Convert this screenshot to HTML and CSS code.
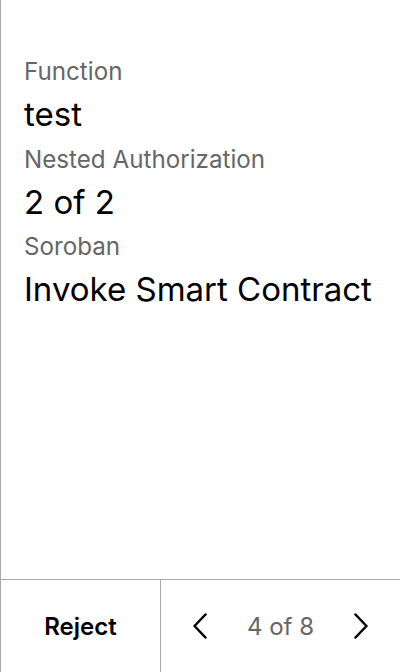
FILE: index.html
```html
<!DOCTYPE html>
<html>
<head>
<meta charset="utf-8">
<link rel="stylesheet" href="styles.css">
</head>
<body>
<div class="screen">
  <div class="content">
    <div class="field">
      <div class="label">Function</div>
      <div class="value">test</div>
    </div>
    <div class="field">
      <div class="label">Nested Authorization</div>
      <div class="value">2 of 2</div>
    </div>
    <div class="field">
      <div class="label">Soroban</div>
      <div class="value">Invoke Smart Contract</div>
    </div>
  </div>
  <div class="footer">
    <div class="reject">Reject</div>
    <div class="pager">
      <svg class="chev" width="16" height="26" viewBox="0 0 16 26"><path d="M13.5 1.5 L2.5 13 L13.5 24.5" fill="none" stroke="#000" stroke-width="2.5" stroke-linecap="round" stroke-linejoin="round"/></svg>
      <span class="count">4 of 8</span>
      <svg class="chev" width="16" height="26" viewBox="0 0 16 26"><path d="M2.5 1.5 L13.5 13 L2.5 24.5" fill="none" stroke="#000" stroke-width="2.5" stroke-linecap="round" stroke-linejoin="round"/></svg>
    </div>
  </div>
</div>
</body>
</html>
```

FILE: styles.css
```css
html, body {
  margin: 0;
  padding: 0;
  background: #fff;
}
body {
  font-family: Inter, "Noto Sans", sans-serif;
  color: #000;
}
.screen {
  width: 400px;
  height: 672px;
  box-sizing: border-box;
  border-left: 1px solid #aaaaaa;
  display: flex;
  flex-direction: column;
}
.content {
  flex: 1;
  padding: 58px 0 0 23px;
  display: flex;
  flex-direction: column;
}
.field {
  display: flex;
  flex-direction: column;
}
.label {
  font-size: 24.2px;
  line-height: 28px;
  color: #666666;
}
.value {
  font-size: 33px;
  line-height: 56px;
  margin-bottom: 3.5px;
  color: #000;
}
.footer {
  height: 92px;
  border-top: 1px solid #aaaaaa;
  display: flex;
}
.reject {
  width: 159px;
  border-right: 1px solid #aaaaaa;
  display: flex;
  align-items: center;
  justify-content: center;
  font-size: 24px;
  font-weight: 600;
}
.pager {
  flex: 1;
  display: flex;
  align-items: center;
  justify-content: space-between;
  padding: 0 31px 0 31px;
}
.chev {
  display: block;
}
.count {
  font-size: 24px;
  color: #666666;
}
```
